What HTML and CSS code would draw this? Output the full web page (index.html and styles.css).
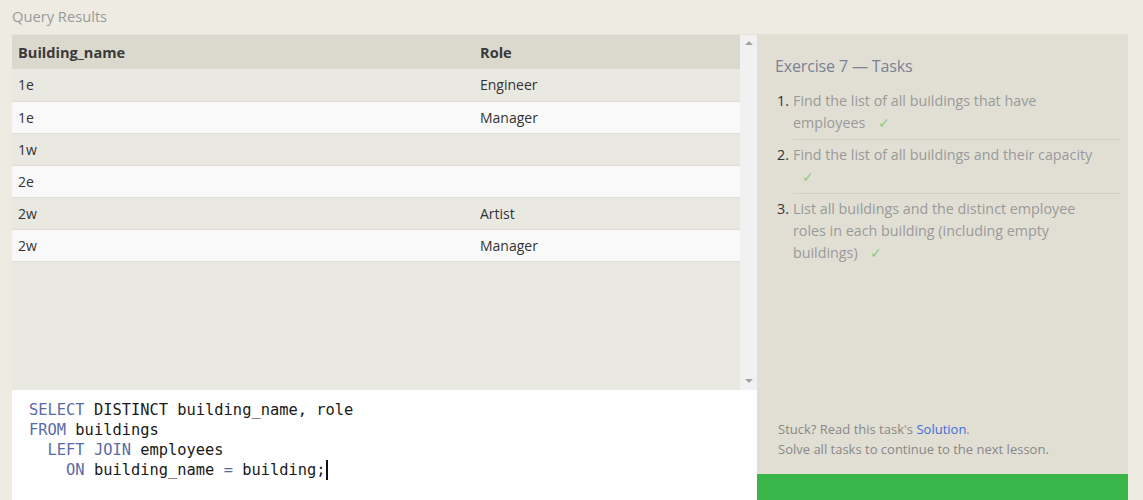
FILE: index.html
```html
<!DOCTYPE html>
<html>
<head>
<meta charset="utf-8">
<link rel="stylesheet" href="styles.css">
</head>
<body>
<div class="page">
  <div class="caption">Query Results</div>
  <div class="main">
    <div class="left">
      <div class="results">
        <div class="table-wrap">
          <table class="grid">
            <thead>
              <tr><th class="c1">Building_name</th><th>Role</th></tr>
            </thead>
            <tbody>
              <tr class="odd"><td class="c1">1e</td><td>Engineer</td></tr>
              <tr class="even"><td class="c1">1e</td><td>Manager</td></tr>
              <tr class="odd"><td class="c1">1w</td><td></td></tr>
              <tr class="even"><td class="c1">2e</td><td></td></tr>
              <tr class="odd"><td class="c1">2w</td><td>Artist</td></tr>
              <tr class="even"><td class="c1">2w</td><td>Manager</td></tr>
            </tbody>
          </table>
        </div>
        <div class="scrollbar">
          <span class="arrow up"></span>
          <span class="arrow down"></span>
        </div>
      </div>
      <div class="editor">
<pre><span class="kw">SELECT</span> DISTINCT building_name, role
<span class="kw">FROM</span> buildings
  <span class="kw">LEFT JOIN</span> employees
    <span class="kw">ON</span> building_name <span class="kw">=</span> building;<span class="caret"></span></pre>
      </div>
    </div>
    <div class="panel">
      <div class="panel-body">
        <h2 class="panel-title">Exercise 7 — Tasks</h2>
        <ol class="tasks">
          <li><span class="num">1.</span><span class="txt">Find the list of all buildings that have employees <span class="check">✓</span></span></li>
          <li><span class="num">2.</span><span class="txt">Find the list of all buildings and their capacity <span class="check">✓</span></span></li>
          <li><span class="num">3.</span><span class="txt">List all buildings and the distinct employee roles in each building (including empty buildings) <span class="check">✓</span></span></li>
        </ol>
        <div class="help">
          <p>Stuck? Read this task's <a class="link" href="#">Solution</a>.</p>
          <p>Solve all tasks to continue to the next lesson.</p>
        </div>
      </div>
      <div class="green-bar"></div>
    </div>
  </div>
</div>
</body>
</html>
```

FILE: styles.css
```css
* { box-sizing: border-box; }
html, body {
  margin: 0;
  padding: 0;
  background: #eeebe3;
  font-family: "Open Sans", "Noto Sans", sans-serif;
  font-size: 14px;
  color: #333;
  height: 500px;
  overflow: hidden;
}
.page {
  padding-left: 12px;
}
.caption {
  height: 34px;
  line-height: 32px;
  color: #999;
  font-size: 14.7px;
}
.main {
  display: flex;
  height: 466px;
}
.left {
  width: 745px;
  display: flex;
  flex-direction: column;
}
.results {
  height: 356px;
  display: flex;
  background: #eae9e1;
  border-top: 1px solid #e4e2d8;
}
.table-wrap {
  flex: 1;
}
.grid {
  width: 100%;
  border-collapse: collapse;
  font-size: 14px;
}
.grid th {
  background: #dbd9cd;
  height: 34px;
  text-align: left;
  padding: 0 6px;
  font-weight: 700;
  font-size: 14.6px;
  color: #3a3a3a;
}
.grid td {
  height: 32px;
  padding: 0 6px;
  color: #333;
  border-bottom: 1px solid #dedcd4;
}
.grid .c1 { width: 462px; }
.grid tr.odd td { background: #eae9e1; }
.grid tr.even td { background: #f9f9f9; }
.scrollbar {
  width: 17px;
  background: #f1f1f1;
  display: flex;
  flex-direction: column;
  justify-content: space-between;
  align-items: center;
  padding: 6px 0 7px;
}
.arrow {
  width: 0;
  height: 0;
  border-left: 4px solid transparent;
  border-right: 4px solid transparent;
}
.arrow.up { border-bottom: 4px solid #a3a3a3; }
.arrow.down { border-top: 4px solid #a3a3a3; }
.editor {
  flex: 1;
  background: #fff;
  padding: 10px 0 0 17px;
}
.editor pre {
  margin: 0;
  font-family: "DejaVu Sans Mono", "Liberation Mono", monospace;
  font-size: 15.4px;
  line-height: 20px;
  color: #1a1a1a;
}
.kw { color: #5a6aa8; }
.caret {
  display: inline-block;
  width: 2px;
  height: 20px;
  background: #111;
  vertical-align: -5px;
}
.panel {
  width: 371px;
  background: #e1dfd4;
  display: flex;
  flex-direction: column;
}
.panel-body {
  flex: 1;
  display: flex;
  flex-direction: column;
  padding: 19px 8px 0 18px;
}
.panel-title {
  margin: 0 0 11px;
  font-weight: 400;
  font-size: 16px;
  color: #7b8292;
  letter-spacing: -0.15px;
  line-height: 26px;
}
.tasks {
  list-style: none;
  margin: 0;
  padding: 0;
}
.tasks li {
  display: flex;
  line-height: 22px;
  margin-bottom: 4.5px;
  font-size: 14.3px;
}
.num {
  width: 18px;
  padding-left: 2px;
  color: #333;
  flex: none;
}
.txt {
  flex: 1;
  color: #9a9a9a;
  padding: 0 12px 4.5px 0;
  border-bottom: 1px solid #d3d1c6;
}
.tasks li:last-child .txt { border-bottom: none; }
.check {
  color: #86cc86;
  margin-left: 9px;
}
.help {
  margin-top: auto;
  padding-left: 3px;
  padding-bottom: 15px;
  color: #888;
  font-size: 13px;
}
.help p {
  margin: 0;
  line-height: 20px;
}
.link {
  color: #3c6fd6;
  text-decoration: none;
}
.green-bar {
  height: 26px;
  background: #39b54a;
}
```
